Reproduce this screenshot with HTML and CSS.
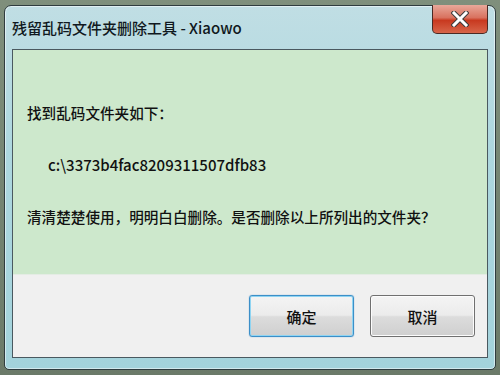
FILE: index.html
```html
<!DOCTYPE html>
<html lang="zh-CN">
<head>
    <meta charset="UTF-8">
    <title>残留乱码文件夹删除工具 - Xiaowo</title>
    <link rel="stylesheet" href="styles.css">
</head>
<body>
    <div class="window">
        <div class="title-bar">
            <span class="title">残留乱码文件夹删除工具 - Xiaowo</span>
            <div class="close-button">
                <svg width="18" height="16" viewBox="0 0 18 16">
                    <path d="M3 2 L15 14 M15 2 L3 14" stroke="#3b3b3b" stroke-width="5" stroke-linecap="square"/>
                    <path d="M3 2 L15 14 M15 2 L3 14" stroke="#ffffff" stroke-width="3" stroke-linecap="square"/>
                </svg>
            </div>
        </div>

        <div class="dialog">
            <div class="dialog-body">
                <p class="line">找到乱码文件夹如下：</p>
                <p class="line folder">c:\3373b4fac8209311507dfb83</p>
                <p class="line">清清楚楚使用，明明白白删除。是否删除以上所列出的文件夹？</p>
            </div>
            <div class="dialog-buttons">
                <button class="button primary">确定</button>
                <button class="button">取消</button>
            </div>
        </div>
    </div>
</body>
</html>
```

FILE: styles.css
```css
* {
    margin: 0;
    padding: 0;
    box-sizing: border-box;
}

body {
    width: 500px;
    height: 375px;
    overflow: hidden;
    background: linear-gradient(180deg, #7f8f7c 0%, #6b7a69 100%);
    font-family: "Noto Sans CJK SC", "Liberation Sans", sans-serif;
    padding: 5px 4px 5px 4px;
}

.window {
    height: 365px;
    border: 1px solid #2f3c3f;
    border-radius: 7px 7px 5px 5px;
    background: linear-gradient(180deg, #c0dee4 0%, #add7df 40%, #a3d3dc 100%);
    box-shadow: inset 0 0 0 1px rgba(255, 255, 255, 0.5);
    display: flex;
    flex-direction: column;
    padding: 0 7px 11px 7px;
}

.title-bar {
    position: relative;
    height: 43px;
    flex-shrink: 0;
    display: flex;
    align-items: center;
    padding-bottom: 3px;
}

.title {
    font-size: 15px;
    font-weight: 500;
    color: #101820;
    padding-top: 3px;
}

.close-button {
    position: absolute;
    top: -1px;
    right: 0;
    width: 56px;
    height: 29px;
    border: 1px solid #4a2a24;
    border-top: none;
    border-radius: 0 0 5px 5px;
    background: linear-gradient(180deg, #e8a89a 0%, #d9725f 45%, #c8391f 55%, #d7654a 100%);
    display: flex;
    justify-content: center;
    align-items: center;
}

.dialog {
    flex: 1;
    border: 1px solid #4a5960;
    display: flex;
    flex-direction: column;
}

.dialog-body {
    height: 224px;
    background: #cde8cc;
    padding-top: 37px;
    padding-left: 14px;
}

.line {
    font-size: 14.6px;
    font-weight: 500;
    line-height: 52px;
    color: #111;
    white-space: nowrap;
}

.folder {
    padding-left: 21px;
    font-size: 15px;
}

.dialog-buttons {
    flex: 1;
    background: #f0f0f0;
    border-top: 1px solid #e4ece4;
    display: flex;
    justify-content: flex-end;
    align-items: flex-start;
    gap: 16px;
    padding: 20px 12px 0 0;
}

.button {
    width: 105px;
    height: 42px;
    border: 1px solid #707070;
    border-radius: 3px;
    background: linear-gradient(180deg, #f4f4f4 0%, #ebebeb 48%, #dcdcdc 52%, #cfcfcf 100%);
    box-shadow: inset 0 0 0 1px #fcfcfc;
    font-family: "Noto Sans CJK SC", sans-serif;
    font-size: 15px;
    font-weight: 500;
    color: #111;
}

.button.primary {
    border-color: #3c8fc8;
    box-shadow: inset 0 0 0 1px #8fd4f2, 0 0 1px #3c8fc8;
}
```
